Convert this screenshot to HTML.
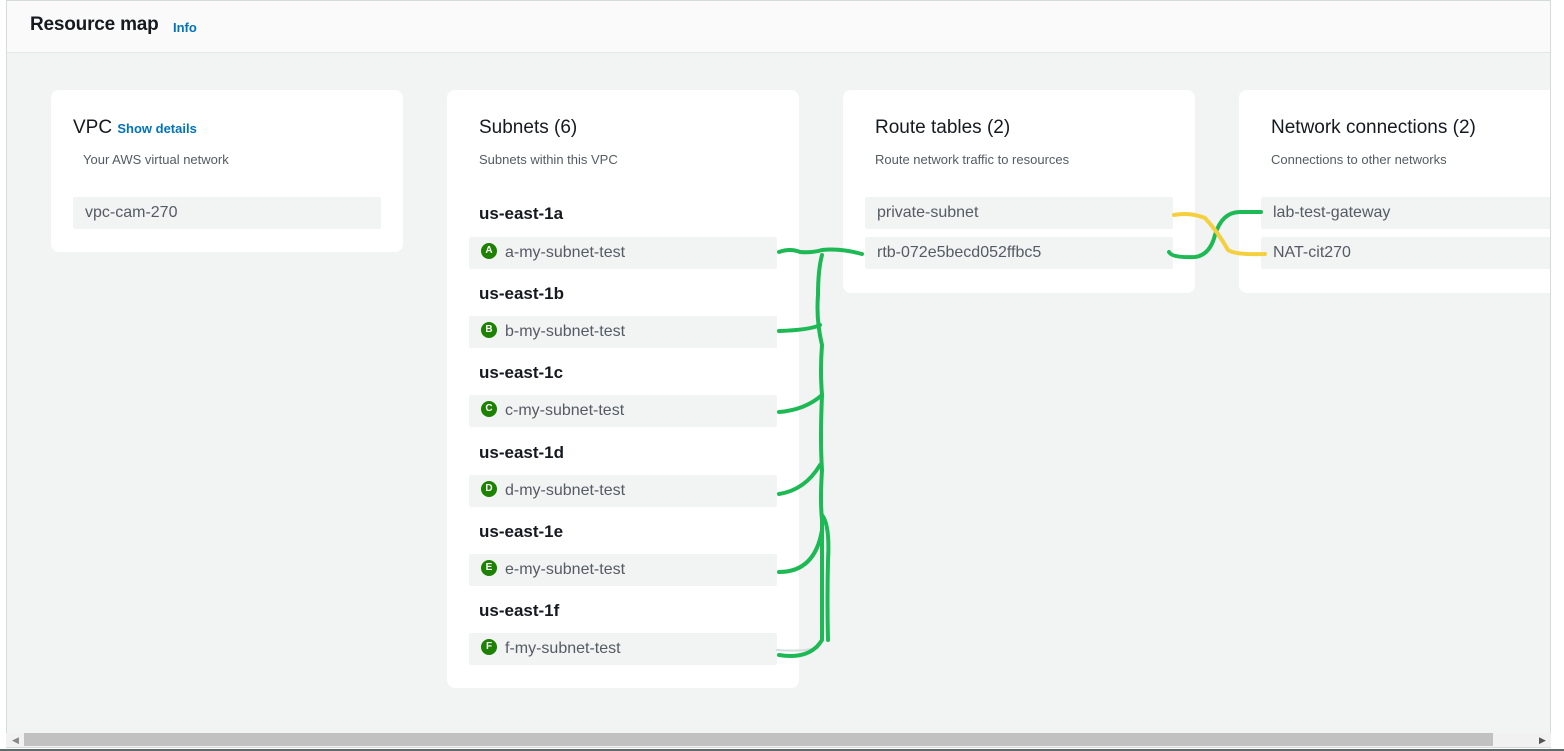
<!DOCTYPE html>
<html><head><meta charset="utf-8"><style>
*{box-sizing:border-box;margin:0;padding:0}
body{width:1564px;height:751px;overflow:hidden;background:#fff;font-family:"Liberation Sans",sans-serif;position:relative}
.frame{position:absolute;left:6px;top:0;width:1545px;height:748px;border:1px solid #d5dbdb;background:#f2f3f3;overflow:hidden}
.hdr{position:absolute;left:0;top:0;right:0;height:52px;background:#fafafa;border-bottom:1px solid #e4e7e7}
.hdr h1{position:absolute;left:23px;top:13px;font-size:19px;font-weight:bold;color:#16191f;letter-spacing:-0.2px}
.hdr a{position:absolute;left:166px;top:19px;font-size:13px;font-weight:bold;color:#0073bb}
.card{position:absolute;background:#fff;border-radius:8px}
.t{position:absolute;font-size:19px;color:#16191f}
.s{position:absolute;font-size:13px;color:#545b64}
.it{position:absolute;height:32px;background:#f2f3f3;border-radius:2px;font-size:16px;color:#545b64;line-height:32px;padding-left:12px}
.az{position:absolute;font-size:17px;font-weight:bold;color:#16191f}
.b{display:inline-block;width:16px;height:16px;border-radius:50%;background:#1d8102;color:#fff;font-size:10px;font-weight:bold;text-align:center;line-height:16px;vertical-align:middle;margin:-3px 8px 0 0}
.sb{position:absolute;left:6px;top:733px;width:1545px;height:14px;background:#f1f1f1}
.th{position:absolute;left:18px;top:0;width:1469px;height:13px;background:#c1c1c1}
</style></head><body>
<div class="frame">
<div class="hdr"><h1>Resource map</h1><a>Info</a></div>
<div class="card" style="left:44px;top:89px;width:352px;height:162px">
<div class="t" style="left:22px;top:27px">VPC <span style="font-size:13px;font-weight:bold;color:#0073bb">Show details</span></div>
<div class="s" style="left:32px;top:62px">Your AWS virtual network</div>
<div class="it" style="left:22px;top:107px;width:308px">vpc-cam-270</div>
</div>
<div class="card" style="left:440px;top:89px;width:352px;height:598px">
<div class="t" style="left:32px;top:27px">Subnets (6)</div>
<div class="s" style="left:32px;top:62px">Subnets within this VPC</div>
<div class="az" style="left:32px;top:114px">us-east-1a</div>
<div class="it" style="left:22px;top:147px;width:308px"><span class="b">A</span>a-my-subnet-test</div>
<div class="az" style="left:32px;top:194px">us-east-1b</div>
<div class="it" style="left:22px;top:226px;width:308px"><span class="b">B</span>b-my-subnet-test</div>
<div class="az" style="left:32px;top:273px">us-east-1c</div>
<div class="it" style="left:22px;top:305px;width:308px"><span class="b">C</span>c-my-subnet-test</div>
<div class="az" style="left:32px;top:353px">us-east-1d</div>
<div class="it" style="left:22px;top:385px;width:308px"><span class="b">D</span>d-my-subnet-test</div>
<div class="az" style="left:32px;top:432px">us-east-1e</div>
<div class="it" style="left:22px;top:464px;width:308px"><span class="b">E</span>e-my-subnet-test</div>
<div class="az" style="left:32px;top:511px">us-east-1f</div>
<div class="it" style="left:22px;top:543px;width:308px"><span class="b">F</span>f-my-subnet-test</div>
</div>
<div class="card" style="left:836px;top:89px;width:352px;height:203px">
<div class="t" style="left:32px;top:27px">Route tables (2)</div>
<div class="s" style="left:32px;top:62px">Route network traffic to resources</div>
<div class="it" style="left:22px;top:107px;width:308px">private-subnet</div>
<div class="it" style="left:22px;top:147px;width:308px">rtb-072e5becd052ffbc5</div>
</div>
<div class="card" style="left:1232px;top:89px;width:352px;height:203px">
<div class="t" style="left:32px;top:27px">Network connections (2)</div>
<div class="s" style="left:32px;top:62px">Connections to other networks</div>
<div class="it" style="left:22px;top:107px;width:308px">lab-test-gateway</div>
<div class="it" style="left:22px;top:147px;width:308px">NAT-cit270</div>
</div>
</div>
<svg style="position:absolute;left:0;top:0" width="1564" height="751" fill="none" stroke-linecap="round">
<path d="M777 650 Q800 652 818 648" stroke="#d5dbdb" stroke-width="2"/>
<g stroke="#1db954" stroke-width="4">
<path d="M779 252 Q790 248 800 252 Q812 253 822 250 Q840 248 862 254"/>
<path d="M822 255 Q818 270 818 295 Q816 320 822 345 Q820 370 822 395 Q820 440 822 470 Q820 500 822 520 Q822 580 822 640 Q810 660 779 655"/>
<path d="M779 331 Q810 330 820 325"/>
<path d="M779 412 Q805 410 822 395"/>
<path d="M779 494 Q805 490 820 465"/>
<path d="M779 572 Q815 572 822 530"/>
<path d="M822 515 Q830 525 828 560 Q827 600 828 640"/>
<path d="M1169 252 Q1172 258 1195 257 Q1210 255 1215 235 Q1222 212 1240 212 L1261 212"/>
</g>
<path d="M1174 215 Q1190 212 1205 218 Q1218 232 1228 250 Q1235 255 1265 254" stroke="#f4d03f" stroke-width="4"/>
</svg>
<div class="sb"><div class="th"></div></div>
<div style="position:absolute;left:12px;top:735px;font-size:9px;color:#888">&#9664;</div>
<div style="position:absolute;left:1539px;top:735px;font-size:9px;color:#555">&#9654;</div>
<div style="position:absolute;left:0;top:749px;width:1564px;height:2px;background:#5f6b6b"></div>
</body></html>
